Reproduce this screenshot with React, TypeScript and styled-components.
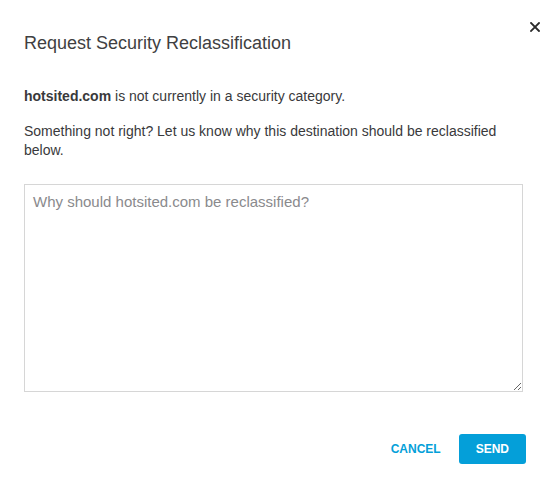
import styled, { createGlobalStyle } from "styled-components";

const GlobalStyle = createGlobalStyle`
  html, body {
    margin: 0;
    padding: 0;
    background: #fff;
  }
  body {
    font-family: "Liberation Sans", Arial, Helvetica, sans-serif;
    color: #39393b;
  }
`;

const Dialog = styled.div`
  position: relative;
  width: 551px;
  height: 486px;
  box-sizing: border-box;
  padding: 32px 28px 0 24px;
  display: flex;
  flex-direction: column;
`;

const Title = styled.h2`
  margin: 0;
  font-size: 18px;
  font-weight: 400;
  line-height: 22px;
  color: #3f3f42;
`;

const CloseButton = styled.button`
  position: absolute;
  top: 19px;
  right: 8px;
  width: 16px;
  height: 16px;
  padding: 0;
  border: none;
  background: transparent;
  display: flex;
  align-items: center;
  justify-content: center;
  cursor: pointer;
`;

const Text = styled.p<{ $gap?: number }>`
  margin: ${({ $gap }) => $gap ?? 0}px 0 0;
  font-size: 14px;
  line-height: 19px;
  color: #39393b;
`;

const Strong = styled.b`
  font-weight: 700;
`;

const Reason = styled.textarea`
  margin-top: 24px;
  width: 499px;
  height: 208px;
  box-sizing: border-box;
  border: 1px solid #d6d6d6;
  border-radius: 0;
  padding: 7px 8px;
  font-family: "Liberation Sans", Arial, sans-serif;
  font-size: 15px;
  line-height: 20px;
  color: #39393b;
  outline: none;
  &::placeholder {
    color: #8a8a8d;
  }
`;

const Footer = styled.div`
  margin-top: 42px;
  width: 502px;
  display: flex;
  justify-content: flex-end;
  align-items: center;
  gap: 2px;
`;

const Button = styled.button<{ $primary?: boolean }>`
  height: 30px;
  padding: 0 ${({ $primary }) => ($primary ? 17 : 16)}px;
  border: none;
  border-radius: 3px;
  font-family: "Liberation Sans", Arial, sans-serif;
  font-size: 12px;
  font-weight: 700;
  cursor: pointer;
  background: ${({ $primary }) => ($primary ? "#049fd9" : "transparent")};
  color: ${({ $primary }) => ($primary ? "#fff" : "#049fd9")};
`;

export default function App() {
  return (
    <>
      <GlobalStyle />
      <Dialog>
        <CloseButton aria-label="Close">
          <svg width="10" height="10" viewBox="0 0 10 10">
            <path d="M1 1L9 9M9 1L1 9" stroke="#2a2a2a" strokeWidth="1.8" strokeLinecap="square" />
          </svg>
        </CloseButton>
        <Title>Request Security Reclassification</Title>
        <Text $gap={33}>
          <Strong>hotsited.com</Strong> is not currently in a security category.
        </Text>
        <Text $gap={16}>
          Something not right? Let us know why this destination should be reclassified below.
        </Text>
        <Reason placeholder="Why should hotsited.com be reclassified?" />
        <Footer>
          <Button>CANCEL</Button>
          <Button $primary>SEND</Button>
        </Footer>
      </Dialog>
    </>
  );
}
